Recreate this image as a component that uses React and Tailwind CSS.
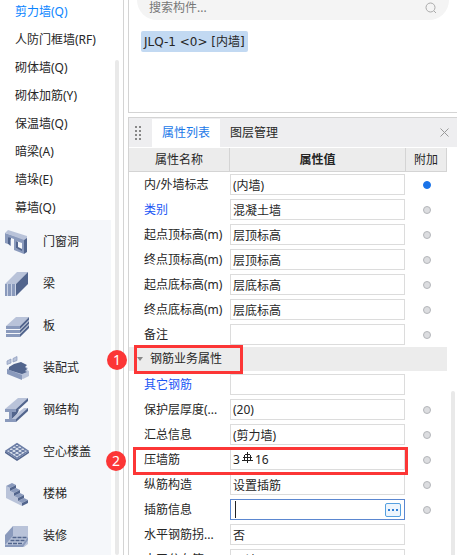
import React, { useState } from 'react';

// --- Data ---

const wallTypes = ['剪力墙(Q)', '人防门框墙(RF)', '砌体墙(Q)', '砌体加筋(Y)', '保温墙(Q)', '暗梁(A)', '墙垛(E)', '幕墙(Q)'];

const basicProps = [
  { name: '内/外墙标志', value: '(内墙)', extra: true },
  { name: '类别', value: '混凝土墙', blue: true },
  { name: '起点顶标高(m)', value: '层顶标高' },
  { name: '终点顶标高(m)', value: '层顶标高' },
  { name: '起点底标高(m)', value: '层底标高' },
  { name: '终点底标高(m)', value: '层底标高' },
  { name: '备注', value: '' },
];

const rebarProps = [
  { name: '其它钢筋', value: '', blue: true, noExtra: true },
  { name: '保护层厚度(...', value: '(20)' },
  { name: '汇总信息', value: '(剪力墙)' },
  { name: '压墙筋', value: '3', suffix: '16', mark: true },
  { name: '纵筋构造', value: '设置插筋' },
  { name: '插筋信息', value: '', editing: true },
  { name: '水平钢筋拐...', value: '否', noExtra: true },
  { name: '水平分布筋...', value: '不计入', noExtra: true },
];

// --- Icons ---

const L = '#b9c3d9';
const M = '#8a9abc';
const D = '#52658d';

const Icon = ({ children }) => (
  <svg viewBox="0 0 24 24" className="size-6 shrink-0" aria-hidden="true">{children}</svg>
);

const categories = [
  {
    name: '门窗洞',
    icon: (
      <Icon>
        <path fill={M} fillRule="evenodd" d="M0 3 19 9v15l-10-4V9L6 8v8l-2-1V7L3 7v7l-3-1zM11 11v7l6 2v-7z" />
        <path fill={L} d="M0 3 3 0l19 6v3l-3 1z" />
        <path fill={D} d="m19 10 3-2v14l-3 2zM3 7l3 1v2L5 9v6l-2-1zM11 11l2 1v5l4 2v2l-6-3z" />
      </Icon>
    ),
  },
  {
    name: '梁',
    icon: (
      <Icon>
        <path fill={L} d="M0 12 12 0h11L11 12z" />
        <path fill={D} d="M11 12 23 0v12L11 24z" />
        <path fill={M} d="M0 12h11v12H0z" />
        <path stroke="#c9d2e4" d="M2.5 12v12M6.500 12v12M10.500 12v12" />
      </Icon>
    ),
  },
  {
    name: '板',
    icon: (
      <Icon>
        <path fill={L} d="M1 12 11 3h13L15 12z" />
        <path fill={M} d="M1 12h14v3H1zM1 16h14v3H1zM1 20h14v3H1z" />
        <path fill={D} d="m15 12 9-9v3l-9 9zM15 16l9-9v3l-9 9zM15 20l9-9v3l-9 9z" />
      </Icon>
    ),
  },
  {
    name: '装配式',
    icon: (
      <Icon>
        <path fill={L} d="m2 13 12-6 9 5-1 2 2 1v5l-6 3L2 17z" />
        <path fill={D} d="m4 11 5-3 7-2 6 3-2 2 2 2-2 2 2 1-5 2L4 14z" />
        <path fill={M} d="m2 13 15 6v5L2 18z" />
        <path fill={L} stroke={M} strokeWidth=".7" d="m2 5 4-2v4L2 8.500zM8 2.500l4-2v4L8 6z" />
      </Icon>
    ),
  },
  {
    name: '钢结构',
    icon: (
      <Icon>
        <path fill={L} d="M0 11 13 0h10L11 11z" />
        <path fill={D} d="M11 11 23 0v3L11 14zM7 14l7-2-2 4-5 5z" />
        <path fill={L} d="m7 21 5-5 3-3 4-3h4v2L11 21z" />
        <path fill={D} d="m11 21 12-11v3L11 24z" />
        <path fill={M} d="M0 11h11v3H7v7h4v3H0v-3h4v-7H0z" />
      </Icon>
    ),
  },
  {
    name: '空心楼盖',
    icon: (
      <Icon>
        <path fill={D} d="M0 11v2l12 8 12-8v-2L12 19z" />
        <path fill="#e3e8f2" d="M12 3 24 11 12 19 0 11z" />
        <path
          fill="none"
          stroke="#6b7da5"
          strokeWidth="1.400"
          d="m12 3.700 11 7.300-11 7.300L1 11zM3 9l12 8M6 7l12 8M9 5l12 8M3 13l12-8M6 15l12-8M9 17l12-8"
        />
      </Icon>
    ),
  },
  {
    name: '楼梯',
    icon: (
      <Icon>
        <path fill={L} d="m1 4 4 2v3l4 2v3l4 2v3l4 2v3L1 16z" />
        <path fill={M} d="m1 4 6-3 4 2-6 3zM5 9l6-3 4 2-6 3zM9 14l6-3 4 2-6 3zM13 19l6-3 4 2-6 3z" />
        <path fill={D} d="m5 6 6-3v3L5 9zM9 11l6-3v3l-6 3zM13 16l6-3v3l-6 3zM17 21l6-3v3l-6 3z" />
      </Icon>
    ),
  },
  {
    name: '装修',
    icon: (
      <Icon>
        <path fill={L} d="M8 2h15v18l-4 3H0v-3L8 12z" />
        <path fill={M} d="m0 11 8-9v10l-8 9z" />
        <path fill={M} d="M0 21h17l6-8v3l-5 7H0z" />
        <path stroke={D} strokeWidth="1.500" strokeDasharray="4 1" d="M7.500 13.500h14M5.500 16.500h14M3 19.500h14" />
      </Icon>
    ),
  },
];

// Grade symbol of the bar: a circle crossed by a double base line
const RebarSign = () => (
  <svg viewBox="0 0 11 11" className="mb-1 size-[11px]" fill="none" stroke="#222" aria-hidden="true">
    <path d="M5.500 0v11M0 8.500h11M1 5.500h9M2.500 3v5M8.500 3v5M3 2.500h5" />
  </svg>
);

// --- UI pieces ---

const Badge = ({ children }) => (
  <span className="absolute top-1/2 -left-[30px] flex size-5 -translate-y-1/2 items-center justify-center rounded-full bg-[#fc3636] text-sm text-white">
    {children}
  </span>
);

const ValueCell = ({ row }) => {
  const [value, setValue] = useState(row.value);

  if (row.editing) {
    return (
      <div className="flex h-[21px] items-center border border-[#5b87d0] bg-white pr-[3px] pl-1">
        <span className="h-[17px] w-px bg-[#222]" />
        <input
          aria-label={row.name}
          value={value}
          onChange={(e) => setValue(e.target.value)}
          className="min-w-0 flex-1 outline-none"
        />
        <button
          type="button"
          aria-label="更多"
          className="flex h-3.5 w-4 items-center justify-center gap-0.5 rounded-xs border border-[#55a0e0] bg-[#edf5fd]"
        >
          <i className="size-0.5 bg-[#2f7fd6]" />
          <i className="size-0.5 bg-[#2f7fd6]" />
          <i className="size-0.5 bg-[#2f7fd6]" />
        </button>
      </div>
    );
  }

  if (row.suffix) {
    return (
      <div className="flex h-[21px] items-center gap-0.5 border border-[#dcdcdc] bg-white px-0.5">
        <span>{row.value}</span>
        <RebarSign />
        <span>{row.suffix}</span>
      </div>
    );
  }

  return (
    <input
      aria-label={row.name}
      value={value}
      onChange={(e) => setValue(e.target.value)}
      className="block h-[21px] w-full border border-[#dcdcdc] bg-white px-0.5 outline-none"
    />
  );
};

const PropertyRow = ({ row }) => {
  const [checked, setChecked] = useState(!!row.extra);
  return (
    <tr className="relative h-[25px]">
      <th scope="row" className={`pl-[15px] text-left font-normal whitespace-nowrap ${row.blue ? 'text-[#1a56f5]' : ''}`}>
        {row.name}
        {row.mark && (
          <span className="absolute top-0 right-[39px] -bottom-[3px] left-1 z-10 border-3 border-[#fc3636]">
            <Badge>2</Badge>
          </span>
        )}
      </th>
      <td className="pr-px">
        <ValueCell row={row} />
      </td>
      <td>
        {!row.noExtra && (
          <input
            type="checkbox"
            aria-label={`${row.name} 附加`}
            checked={checked}
            onChange={() => setChecked(!checked)}
            className="mx-auto block size-2 appearance-none rounded-full border border-[#b4b6ba] bg-[#dcdde0] checked:border-[#1a73e8] checked:bg-[#1a73e8]"
          />
        )}
      </td>
    </tr>
  );
};

const Sidebar = () => (
  <aside className="flex w-[124px] shrink-0 border-r border-[#d4d4d4]">
    <nav className="w-[111px]">
      <ul className="-mt-1">
        {wallTypes.map((name, i) => (
          <li key={name}>
            <button type="button" className={`block h-7 w-full pt-1 pl-[15px] text-left ${i === 0 ? 'text-[#0a84ff]' : ''}`}>
              {name}
            </button>
          </li>
        ))}
      </ul>
      <ul className="bg-[#f5f7fa]">
        {categories.map((c) => (
          <li key={c.name}>
            <button type="button" className="flex h-[42px] w-full items-center gap-3.5 pt-0.5 pl-[5px]">
              {c.icon}
              {c.name}
            </button>
          </li>
        ))}
      </ul>
    </nav>
    <div className="mt-15 ml-1 w-1 rounded-full bg-[#e9e9e9]" />
  </aside>
);

const ComponentPanel = () => (
  <section className="shrink-0 border-b border-l border-[#d4d4d4] px-2 pb-[60px]">
    <label className="flex h-5 items-center rounded-b-full bg-[#f4f4f4] px-3">
      <input placeholder="搜索构件..." aria-label="搜索构件" className="mb-1 min-w-0 flex-1 outline-none placeholder:text-[#777]" />
      <svg viewBox="0 0 12 12" className="mb-1 size-3" fill="none" stroke="#aaa" aria-hidden="true">
        <circle cx="5.500" cy="5.500" r="4.500" />
        <path d="m9 9 2 2" />
      </svg>
    </label>
    <button
      type="button"
      className="mt-[11px] ml-1 block h-[21px] rounded-xs bg-[#c2d9f2] px-[3px] font-['DejaVu_Sans','Noto_Sans_CJK_SC',sans-serif]"
    >
      JLQ-1 &lt;0&gt; [内墙]
    </button>
  </section>
);

const PropertyPanel = () => (
  <section className="mt-1 flex-1 border-t border-l border-[#d4d4d4]">
    <div className="flex h-[30px] items-center border-b border-white bg-[#eeeef0]">
      <svg viewBox="0 0 6 14" className="mx-1.5 h-3.5 w-1.5" fill="#888" aria-hidden="true">
        <path d="M0 0h2v2H0zM4 0h2v2H4zM0 4h2v2H0zM4 4h2v2H4zM0 8h2v2H0zM4 8h2v2H4zM0 12h2v2H0zM4 12h2v2H4z" />
      </svg>
      <div className="ml-[5px] flex flex-1" role="tablist">
        <button type="button" role="tab" aria-selected="true" className="h-7 bg-white px-2.5 text-[#1a78e8]">属性列表</button>
        <button type="button" role="tab" aria-selected="false" className="h-7 px-2.5">图层管理</button>
      </div>
      <button type="button" aria-label="关闭" className="mr-2">
        <svg viewBox="0 0 9 9" className="size-[9px]" stroke="#999" aria-hidden="true">
          <path d="m.5.5 8 8M8.500.5l-8 8" />
        </svg>
      </button>
    </div>
    <div className="flex">
      <div className="min-w-0 flex-1">
        <table className="w-full table-fixed border-separate border-spacing-0">
          <colgroup>
            <col className="w-[101px]" />
            <col />
            <col className="w-[41px]" />
          </colgroup>
          <thead className="bg-[#ececec]">
            <tr className="h-6">
              <th className="border-r border-b border-[#d4d4d4] font-normal">属性名称</th>
              <th className="border-r border-b border-[#d4d4d4] font-bold">属性值</th>
              <th className="border-r border-b border-[#d4d4d4] font-normal">附加</th>
            </tr>
          </thead>
          <tbody>
            {basicProps.map((row) => <PropertyRow key={row.name} row={row} />)}
            <tr className="relative h-[25px]">
              <th colSpan={3} scope="rowgroup" className="border-b border-white bg-[#ececec] text-left font-normal">
                <button type="button" className="flex items-center gap-[7px] pl-2">
                  <svg viewBox="0 0 6 4" className="h-1 w-1.5" fill="#888" aria-hidden="true"><path d="M0 0h6L3 4z" /></svg>
                  钢筋业务属性
                </button>
                <span className="absolute -inset-y-0.5 left-[5px] z-10 w-[109px] border-3 border-[#fc3636]">
                  <Badge>1</Badge>
                </span>
              </th>
            </tr>
            {rebarProps.map((row) => <PropertyRow key={row.name} row={row} />)}
          </tbody>
        </table>
      </div>
      <div className="mt-[243px] mr-0.5 ml-1 w-1 rounded-full bg-[#e9e9e9]" />
    </div>
  </section>
);

const App = () => (
  <div className="flex h-screen overflow-hidden bg-white font-['Noto_Sans','Noto_Sans_CJK_SC',sans-serif] text-xs text-[#262626]">
    <Sidebar />
    <main className="ml-1 flex min-w-0 flex-1 flex-col">
      <ComponentPanel />
      <PropertyPanel />
    </main>
  </div>
);

export default App;
